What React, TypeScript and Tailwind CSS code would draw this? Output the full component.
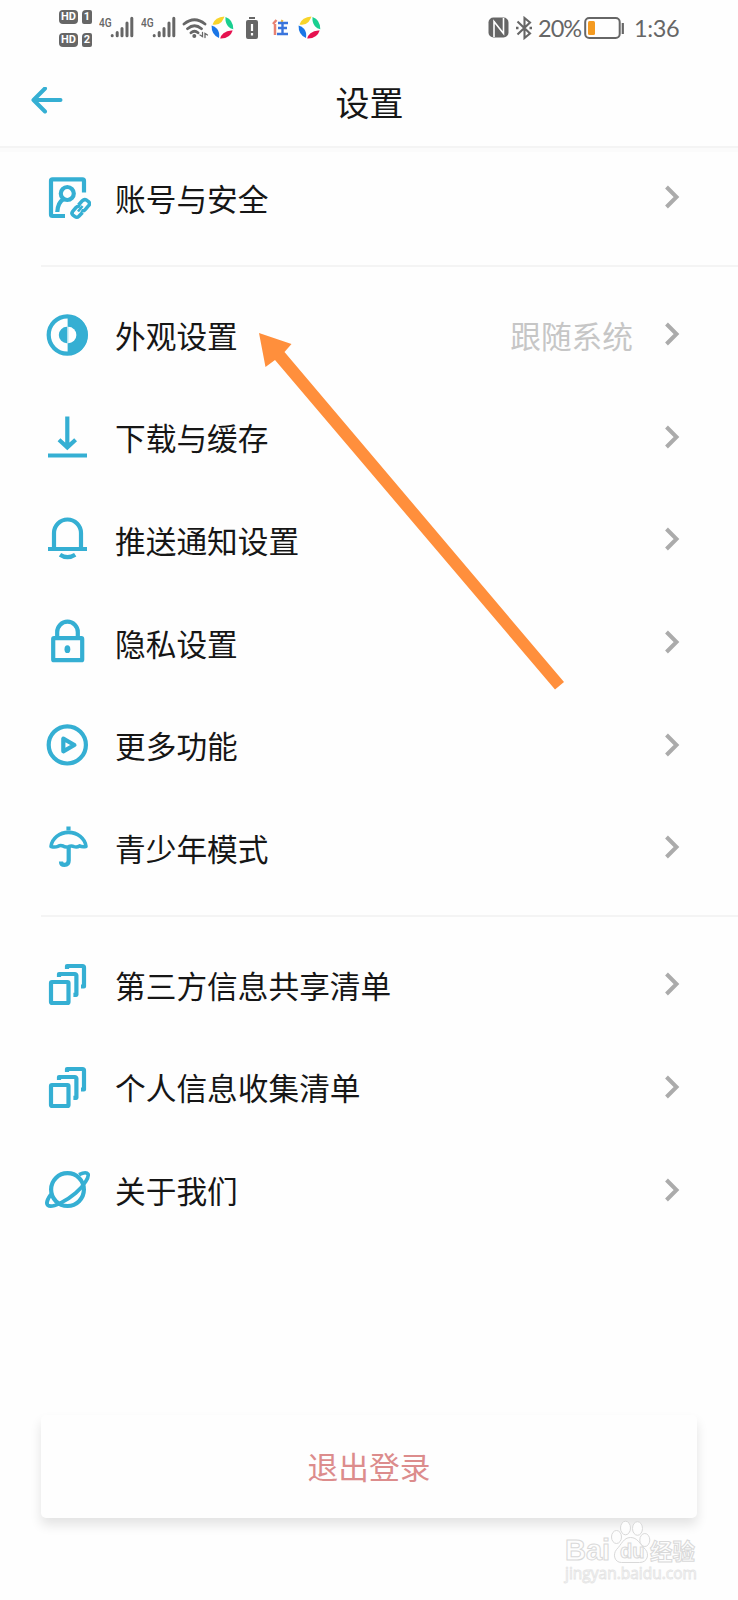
import type { ReactNode } from 'react'

type Item = {
    label: string
    icon: ReactNode
    value?: string
}

const accountIcon = (
    <>
        <path d="M41 18.500V6.800a1.500 1.500 0 0 0-1.500-1.500h-30A1.500 1.500 0 0 0 8 6.800v33.700A1.500 1.500 0 0 0 9.500 42H22" />
        <circle cx="24.300" cy="19.500" r="6.500" />
        <path d="M20.500 25C16 28 14.500 32 14.300 38" />
        <g strokeWidth="3.500">
            <path d="M35.500 31l3.800-4.200q2-2 4.200-.7l2 1.500q2 1.700.3 3.800l-3.600 4.200q-1.700 1.900-4 .9" />
            <path d="M39.500 38.500l-3.600 3.800q-1.900 1.800-3.900.3l-2-1.500q-2-1.700-.3-3.800l3.300-3.800q1.800-1.900 4.100-.9" />
            <path d="M35 37.500l4.500-5.500" strokeWidth="2.600" />
        </g>
    </>
)

const appearanceIcon = (
    <>
        <circle cx="24.300" cy="24" r="18.600" />
        <path d="M24.600 4a20 20 0 0 1 0 40z" fill="currentColor" stroke="none" />
        <path d="M24 15.800a8.200 8.200 0 0 0 0 16.400z" fill="currentColor" stroke="none" />
        <path d="M25.200 15.800a8.200 8.200 0 0 1 0 16.400z" fill="white" stroke="none" />
    </>
)

const downloadIcon = (
    <>
        <path d="M24.300 2.500V34M16 25.800l8.300 7.500 8.300-7.500" />
        <path d="M5 41.500h39" />
    </>
)

const bellIcon = (
    <>
        <path d="M11 33V17a13.500 13.500 0 0 1 27 0v16" />
        <path d="M5 33h39" />
        <path d="M17 38.700q7.400 5 15.200 0" />
    </>
)

const lockIcon = (
    <>
        <rect x="10.200" y="19.200" width="29" height="22" rx=".8" />
        <path d="M14.200 19v-6a10.300 10.300 0 0 1 20.600 0v6" />
        <ellipse cx="24.400" cy="30.200" rx="2.900" ry="3.900" fill="currentColor" stroke="none" />
    </>
)

const playIcon = (
    <>
        <circle cx="24.300" cy="22.900" r="18.600" />
        <path d="M20.300 16.700v12.600L31.400 23z" strokeLinejoin="round" />
    </>
)

const umbrellaIcon = (
    <>
        <path d="M8 22.500a17.600 15.800 0 0 1 35 0q-4 .8-6.500-.6-2.500 1.700-5.500.7-2.500-1.100-5.500 0-3 1-5.500-.6-2.500-1.100-5 .3-3 1.200-7 .2z" strokeLinejoin="round" strokeWidth="3.600" />
        <path d="M25.500 2.500v4" />
        <path d="M25.700 23v13.500q0 4.400-4.200 4.400-3.500 0-3.500-3.500" />
    </>
)

const stackIcon = (
    <>
        <rect x="8" y="21" width="17.500" height="21" rx="1" />
        <path d="M16 16v-3h15.800a1.600 1.600 0 0 1 1.600 1.600v19.200h-3" strokeLinejoin="round" />
        <path d="M24 8V5h15.400A1.600 1.600 0 0 1 41 6.600v18.900h-3" strokeLinejoin="round" />
    </>
)

const planetIcon = (
    <>
        <circle cx="24.500" cy="22.600" r="16.400" />
        <path d="M36 7.600C40.500 5.500 43.800 5.300 44.900 7c1.500 2.500-3.500 11.500-12.200 19C23.500 34 9 41.500 4.900 38.300c-2.200-1.900.1-7 3-11" strokeWidth="3.800" />
    </>
)

const groups: Item[][] = [
    [{ label: '账号与安全', icon: accountIcon }],
    [
        { label: '外观设置', icon: appearanceIcon, value: '跟随系统' },
        { label: '下载与缓存', icon: downloadIcon },
        { label: '推送通知设置', icon: bellIcon },
        { label: '隐私设置', icon: lockIcon },
        { label: '更多功能', icon: playIcon },
        { label: '青少年模式', icon: umbrellaIcon },
    ],
    [
        { label: '第三方信息共享清单', icon: stackIcon },
        { label: '个人信息收集清单', icon: stackIcon },
        { label: '关于我们', icon: planetIcon },
    ],
]

function HdBadge({ sim }: { sim: string }) {
    return (
        <div className="flex gap-[4px] text-[11px] leading-[14px] font-bold text-white">
            <span className="h-[14px] w-[19px] rounded-[4px] bg-[#666] text-center">HD</span>
            <span className="h-[14px] w-[10px] rounded-[2px] rounded-tl-[4px] bg-[#666] text-center">{sim}</span>
        </div>
    )
}

function Signal() {
    return (
        <div className="flex h-[22px] w-[35px]">
            <span className="w-[11px] origin-left scale-x-[0.78] text-[13px] leading-[13px] font-medium">4G</span>
            <svg width="24" height="22" viewBox="0 0 24 22" stroke="currentColor" strokeWidth="3" strokeLinecap="round">
                <path d="M2.200 19.800v-.3M7.200 19.800v-3.300M12 19.800v-7.300M17 19.800V7M21.800 19.800V2.200" />
            </svg>
        </div>
    )
}

function Pinwheel() {
    return (
        <svg width="23" height="23" viewBox="0 0 23 23">
            <path d="M1.500 8.500Q4 1 13.500.6q-1 3-3 5.400-3.500 3.700-9 2.500z" fill="#f8d42a" />
            <path d="M14.500.9q7.800 2.600 7.800 12.400-3.300-.6-5.300-3-3-3.800-2.500-9.400z" fill="#19cf90" />
            <path d="M21.700 14.500q-2.700 8.300-12.500 7.900.8-3.200 3.300-5.200 4-3.200 9.200-2.700z" fill="#e6114f" />
            <path d="M8 22Q.3 19 .6 9.600q3.300.7 5.400 3.200Q9 16.500 8 22z" fill="#1b76e6" />
        </svg>
    )
}

function StatusBar() {
    return (
        <div className="flex h-[60px] items-center pt-px pl-[59px] text-[#666]">
            <div className="mt-[-5px] flex flex-col gap-[9px]">
                <HdBadge sim="1" />
                <HdBadge sim="2" />
            </div>
            <div className="mt-[-7px] ml-[7px] flex gap-[7px]">
                <Signal />
                <Signal />
            </div>
            <svg className="mt-[-6px] ml-[6px]" width="27" height="22" viewBox="0 0 27 22" fill="none" stroke="currentColor" strokeWidth="2.800" strokeLinecap="round">
                <path d="M2 7q10.500-8.500 21 0M5.500 11.700q7-6 14 0M9 15.800q3.500-3 7 0" />
                <circle cx="12.300" cy="19" r="2" fill="currentColor" stroke="none" />
                <path d="M20.500 15.500v4l-2.500-1.500M23 20.500v-4l2.500 1.500" strokeWidth="1.300" />
            </svg>
            <div className="mt-[-6px] ml-[2px] flex items-center">
                <Pinwheel />
                <svg className="ml-[11px]" width="14" height="24" viewBox="0 0 14 24">
                    <path d="M4 1h6v2H4zM3 4h8a2 2 0 0 1 2 2v15a2 2 0 0 1-2 2H3a2 2 0 0 1-2-2V6a2 2 0 0 1 2-2z" fill="currentColor" />
                    <path d="M7 8v7M7 17v2.500" stroke="white" strokeWidth="2.200" />
                </svg>
                <svg className="ml-[13px]" width="17" height="17" viewBox="0 0 17 17" fill="none" strokeWidth="2">
                    <path d="M4.500 1L1 5M3 5v11" stroke="#e88172" strokeWidth="2.500" />
                    <path d="M9 1.500l2 1" stroke="#e9b53b" />
                    <path d="M6 4h10M6 9h9M5 15h11M10.500 4v11" stroke="#3974dc" strokeWidth="2.400" />
                </svg>
                <div className="ml-[9px]">
                    <Pinwheel />
                </div>
            </div>
            <div className="mt-[-6px] ml-auto flex w-[250px] items-center">
                <svg width="21" height="21" viewBox="0 0 21 21">
                    <rect x=".5" y=".5" width="20" height="20" rx="5" fill="currentColor" />
                    <path d="M6 20V4.500l9.500 12M15.500 1v15.500L6 4.500" fill="none" stroke="white" strokeWidth="1.600" />
                </svg>
                <svg className="ml-[6px]" width="18" height="24" viewBox="0 0 18 24" fill="none" stroke="currentColor" strokeWidth="2.100">
                    <path d="M2.500 5.500L15 17.500l-5.500 4.500V2L15 6.500 2.500 18.500" />
                    <path d="M1 12h2.500M14.500 12H17" strokeWidth="2.500" />
                </svg>
                <span className="ml-[5px] w-[44px] font-['Lato'] text-[23.500px] leading-[28px] tracking-[-1px]">20%</span>
                <svg className="ml-[2px]" width="42" height="24" viewBox="0 0 42 24">
                    <rect x="1.200" y="2" width="34.500" height="20" rx="4" fill="none" stroke="currentColor" strokeWidth="2" />
                    <rect x="4" y="5" width="7" height="14" rx="1.500" fill="#f49a20" />
                    <path d="M38.800 7v11" stroke="currentColor" strokeWidth="2.200" />
                </svg>
                <span className="ml-[8px] font-['Lato'] text-[23.500px] leading-[28px] tracking-[-0.400px]">1:36</span>
            </div>
        </div>
    )
}

function Row({ label, icon, value }: Item) {
    return (
        <button className="flex h-[102.700px] w-full items-center pr-[58px] pl-[43px] text-left">
            <svg className="mt-[2px] shrink-0 text-[#35afd3]" width="48" height="48" viewBox="0 0 48 48" fill="none" stroke="currentColor" strokeWidth="4.200">
                {icon}
            </svg>
            <span className="ml-[24px] pt-[7px] text-[30.700px] leading-[44px] whitespace-nowrap text-[#161616]">{label}</span>
            <span className="ml-auto pt-[7px] text-[30.700px] leading-[44px] text-[#c6c6c6]">{value}</span>
            <svg className="ml-[31px]" width="16" height="26" viewBox="0 0 16 26" fill="none" stroke="#ababab" strokeWidth="4">
                <path d="M2.500 3l10 10-10 10" />
            </svg>
        </button>
    )
}

function Watermark() {
    return (
        <div className="absolute top-[1520px] left-[565px] h-[62px] w-[134px] leading-none text-[#fdfdfd]">
            <svg className="absolute top-0 left-[44px]" width="42" height="45" viewBox="0 0 42 45" fill="#fdfdfd" stroke="#d9d9d9">
                <ellipse cx="7.500" cy="17" rx="5" ry="6.500" />
                <ellipse cx="16.500" cy="8" rx="5" ry="6.800" />
                <ellipse cx="28.500" cy="8.500" rx="5" ry="6.800" />
                <ellipse cx="35.800" cy="20" rx="5" ry="6.500" />
                <path d="M21.500 17.500c-7 0-9 7-14 12-4 5-2 13 5 13h18c8 0 10-8 6-13-6-6-8-12-15-12z" />
            </svg>
            <div className="relative flex h-[44px] items-end">
                <span className="w-[55px] font-['Liberation_Sans'] text-[29px] leading-[27px] font-bold [-webkit-text-stroke:1px_#d9d9d9]">Bai</span>
                <span className="w-[30px] font-['Liberation_Sans'] text-[20px] leading-[26px] font-bold [-webkit-text-stroke:1px_#d9d9d9]">du</span>
                <span className="font-['Noto_Sans_CJK_SC'] text-[22.500px] leading-[27px] font-bold whitespace-nowrap [-webkit-text-stroke:1px_#d9d9d9]">经验</span>
            </div>
            <div className="relative text-[15.500px] leading-[18px] font-['Open_Sans'] whitespace-nowrap [-webkit-text-stroke:0.800px_#e4e4e4]">jingyan.baidu.com</div>
        </div>
    )
}

export default function App() {
    return (
        <div className="relative h-[1600px] w-[738px] overflow-hidden bg-[#fefefe] font-['Roboto','Noto_Sans_CJK_SC',sans-serif]">
            <StatusBar />
            <header className="flex h-[86px] items-center pl-[31px]">
                <svg className="mt-[-3px]" width="33" height="30" viewBox="0 0 33 30" fill="none" stroke="#35afd3" strokeWidth="4" strokeLinecap="round" strokeLinejoin="round">
                    <path d="M14 1.500L2.500 13 14 24.500M3 13h26.500" />
                </svg>
                <h1 className="flex-1 pt-[2px] pr-[63px] text-center text-[34px] leading-[48px] text-[#161616]">设置</h1>
            </header>
            <div className="h-[6px] border-t-2 border-[#f4f4f4] bg-[#fbfbfb]" />
            <main className="mt-[-6px]">
                {groups.map((items, i) => (
                    <section key={i}>
                        {i > 0 && <div className="mt-[16px] mb-[16px] ml-[41px] h-[2px] bg-[#f4f4f4]" />}
                        {items.map((item) => (
                            <Row key={item.label} {...item} />
                        ))}
                    </section>
                ))}
            </main>
            <button className="mt-[174px] ml-[41px] flex h-[103px] w-[656px] items-center justify-center rounded-[5px] bg-[#fefefe] pt-[5px] text-[30.700px] text-[#dc8c8c] shadow-[0_7px_12px_rgba(0,0,0,0.110)]">
                退出登录
            </button>
            <svg className="absolute top-[330px] left-[256px]" width="312" height="362" viewBox="256 330 312 362">
                <path d="M259 333l32.500 11-7 8L564 682l-9 7.500L275 360l-9.500 7z" fill="#ff8f3c" />
            </svg>
            <Watermark />
        </div>
    )
}
